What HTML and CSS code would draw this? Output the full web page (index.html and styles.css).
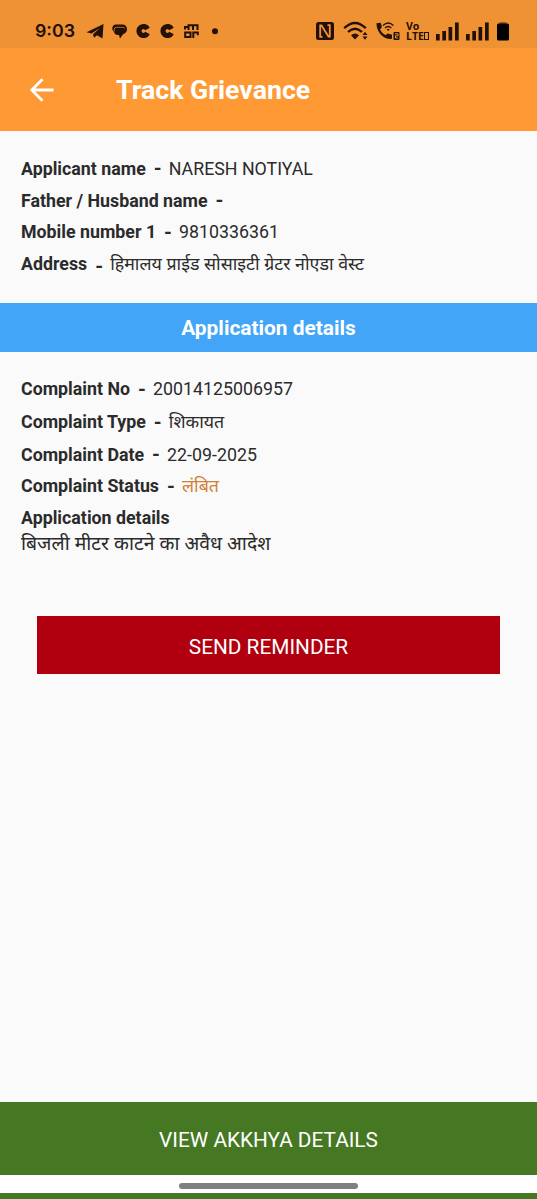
FILE: index.html
```
<!DOCTYPE html>
<html lang="en">
<head>
    <meta charset="UTF-8">
    <meta name="viewport" content="width=device-width, initial-scale=1.0">
    <title>Track Grievance</title>
    <link rel="stylesheet" href="styles.css">
</head>
<body>

<div class="screen">
    <!-- Status bar -->
    <div class="status-bar">
        <span class="time">9:03</span>
        <div class="notifications">
            <svg width="17" height="18" viewBox="0 0 17 18"><path d="M17.500 2 16.500 16.500 11 13.300 8 15.800 7 12.300 14 6 5.500 11.500 .5 10.200Z"/></svg>
            <svg width="15" height="18" viewBox="0 0 15 18"><path d="M4 2.500H10.500c2.500 0 4.500 2 4.500 4.500 0 2.800-1.600 4.500-3.800 5L8 16.500 7 13H6C3.500 13 2.300 11.500 2 9.700 1 9.300.3 8.300.3 6.500.3 4 2 2.500 4 2.500Z"/><path class="cut" d="M2.200 9.500V7.500Q2.200 5.300 4.500 5.300H10.500Q12.300 5.300 13 6.500"/></svg>
            <svg width="15" height="18" viewBox="0 0 15 18"><path class="ring" d="M11.500 7A4.500 4.500 0 1 0 11.500 11"/></svg>
            <svg width="15" height="18" viewBox="0 0 15 18"><path class="ring" d="M11.500 7A4.500 4.500 0 1 0 11.500 11"/></svg>
            <svg width="15" height="18" viewBox="0 0 15 18"><path class="line" d="M1 7.500V5H3.500M4.500 8V3.300H13.500V8M9 3.300V8M1.200 10.500H6.500V15H1.200ZM9.300 16V10.500H13.800V13.200"/></svg>
            <svg width="14" height="18" viewBox="0 0 14 18"><circle cx="7" cy="9.300" r="3"/></svg>
        </div>
        <div class="system-icons">
            <svg width="18" height="20" viewBox="0 0 18 20"><rect y="1" width="18" height="18" rx="2.500"/><path class="nfc-cut" d="M6.500 15.800H4.200V4.500H5.500L12.500 15.500H13.800V4.200H11.500"/></svg>
            <svg class="wifi" width="26" height="20" viewBox="0 0 26 20"><path class="wave" d="M1.200 7.200Q12 -3.200 22.800 7.200M5 11Q12 4.500 19 11"/><path d="M8 14.300Q12 10.500 16 14.300L12 18.500ZM19.500 14 22 10.800 24.500 14ZM19.500 15.500 22 18.700 24.500 15.500Z"/></svg>
            <svg class="call" width="25" height="20" viewBox="0 0 25 20"><path d="M0.500 2.200 4.700 1.800Q6 5 5.600 6.700L3.900 8.400Q6 12.600 9.700 14.200L11.500 12.500 16 13.800V17.800C8 19 .2 11 .5 2.200Z"/><path class="thin-wave" d="M7 4.400Q12.200 -.4 17.400 4.400M9 7Q12.200 4 15.400 7"/><path d="M10.700 8.300Q12.200 7 13.700 8.300L12.200 10Z"/><rect x="17.500" y="11" width="6" height="8" rx="1"/><path class="sim-cut" d="M19 12.800H22V14.800H19.500V17H22"/></svg>
            <div class="volte">
                <span>Vo</span>
                <span class="lte">LTE<i></i></span>
            </div>
            <svg class="signal" width="24" height="20" viewBox="0 0 24 20"><path d="M1 13H4.700V19.500H1ZM7.300 10H11V19.500H7.300ZM13.500 6H17.200V19.500H13.500ZM20 1.500H23.700V19.500H20Z"/></svg>
            <svg class="signal" width="24" height="20" viewBox="0 0 24 20"><path d="M1 13H4.700V19.500H1ZM7.300 10H11V19.500H7.300ZM13.500 6H17.200V19.500H13.500ZM20 1.500H23.700V19.500H20Z"/></svg>
            <svg class="battery" width="12" height="20" viewBox="0 0 12 20"><path class="battery-cap" d="M3 1H9L10 3H2Z"/><rect y="2.500" width="12" height="17" rx="1.500"/></svg>
        </div>
    </div>

    <!-- Toolbar -->
    <header class="toolbar">
        <svg class="back" width="24" height="24" viewBox="0 0 24 24"><path d="M23.500 12H2M12.500 1.200 1.800 12 12.500 22.800"/></svg>
        <h1>Track Grievance</h1>
    </header>

    <!-- Applicant -->
    <section class="applicant">
        <div class="row"><span class="label clipped">Applicant name</span><b class="dash">-</b><span>NARESH NOTIYAL</span></div>
        <div class="row"><span class="label">Father / Husband name</span><b class="dash">-</b></div>
        <div class="row"><span class="label">Mobile number 1</span><b class="dash">-</b><span>9810336361</span></div>
        <div class="row address"><span class="label">Address</span><b class="dash">-</b><span class="hindi" lang="hi">हिमालय प्राईड सोसाइटी ग्रेटर नोएडा वेस्ट</span></div>
    </section>

    <h2>Application details</h2>

    <!-- Complaint -->
    <section class="complaint">
        <div class="row"><span class="label clipped">Complaint No</span><b class="dash">-</b><span>20014125006957</span></div>
        <div class="row type"><span class="label">Complaint Type</span><b class="dash">-</b><span class="hindi" lang="hi">शिकायत</span></div>
        <div class="row"><span class="label clipped">Complaint Date</span><b class="dash">-</b><span>22-09-2025</span></div>
        <div class="row"><span class="label">Complaint Status</span><b class="dash">-</b><span class="hindi pending" lang="hi">लंबित</span></div>
        <div class="row"><span class="label">Application details</span></div>
        <p class="hindi description" lang="hi">बिजली मीटर काटने का अवैध आदेश</p>
    </section>

    <button class="reminder">SEND REMINDER</button>

    <footer>
        <button class="view-details">VIEW AKKHYA DETAILS</button>
        <div class="nav-bar"><div class="handle"></div></div>
        <div class="bottom-strip"></div>
    </footer>
</div>

</body>
</html>
```
FILE: styles.css
```
* {
    box-sizing: border-box;
}
body {
    margin: 0;
    font-family: Roboto, "Noto Sans", sans-serif;
    background-color: #fafafa;
    color: #2b2b2b;
}
.screen {
    display: flex;
    flex-direction: column;
    height: 1199px;
    overflow: hidden;
}
svg {
    display: block;
    flex: none;
    overflow: visible;
    fill: #231006;
}

/* Status bar */
.status-bar {
    display: flex;
    align-items: center;
    height: 48px;
    padding: 14px 28px 0 35px;
    background: #ef9234;
    color: #231006;
}
.time {
    width: 51px;
    font: 600 17.8px/20px Inter, sans-serif;
    white-space: nowrap;
}
.notifications {
    display: flex;
    gap: 9px;
}
.system-icons {
    display: flex;
    align-items: center;
    margin-left: auto;
}
.cut {
    fill: none;
    stroke: #ef9234;
    stroke-width: 0.7;
}
.ring {
    fill: none;
    stroke: #231006;
    stroke-width: 5.2;
}
.line {
    fill: none;
    stroke: #231006;
    stroke-width: 2;
}
.nfc-cut {
    fill: none;
    stroke: #ef9234;
    stroke-width: 1.8;
}
.wave, .thin-wave {
    fill: none;
    stroke: #231006;
    stroke-width: 2.3;
}
.thin-wave {
    stroke-width: 1.4;
}
.sim-cut {
    fill: none;
    stroke: #ef9234;
    stroke-width: 1;
}
.wifi {
    margin-left: 9px;
}
.call {
    margin-left: 7px;
}
.volte {
    width: 24px;
    margin: 0 5px;
    font: 700 10.5px/10px "Open Sans", sans-serif;
}
.volte span {
    display: flex;
}
.lte i {
    width: 5px;
    height: 8px;
    margin: 1px 0 0;
    border: 1.5px solid #231006;
}
.signal {
    margin-right: 6px;
}
.battery {
    margin-left: 2px;
    fill: #000;
}
.battery-cap {
    fill: #8f591f;
}

/* Toolbar */
.toolbar {
    display: flex;
    align-items: center;
    height: 83px;
    padding: 0 30px;
    background: #ff9933;
    color: #fff;
}
.back {
    fill: none;
    stroke: #fff;
    stroke-width: 2.8;
}
h1 {
    margin: 1px 0 0 62px;
    font-size: 26.7px;
    font-weight: 700;
}

/* Details */
.applicant {
    height: 172px;
    padding: 21.5px 21px 0;
}
.complaint {
    padding: 21px 21px 0;
}
.row {
    display: flex;
    align-items: center;
    height: 31.8px;
    font-size: 17.8px;
    white-space: nowrap;
}
.label {
    font-weight: 700;
}
.clipped {
    height: 19px;
    line-height: 20px;
    overflow: hidden;
}
.dash {
    width: 7px;
    margin: 0 8px;
    font-size: 20px;
    line-height: 20px;
}
.address .dash {
    padding-top: 4px;
}
.hindi {
    font-family: "Noto Sans", Roboto, sans-serif;
}
.row .hindi {
    margin-top: -1px;
}
.type {
    height: 33.5px;
}
.pending {
    color: #cf8036;
}
.description {
    margin: -4px 0 0;
    font-size: 19.4px;
    line-height: 26px;
}
h2 {
    height: 49px;
    margin: 0;
    background: #42a5f7;
    color: #fff;
    font-size: 20.9px;
    line-height: 51px;
    text-align: center;
}

/* Buttons */
button {
    border: 0;
    color: #fff;
    font-family: Roboto, sans-serif;
    font-size: 20.8px;
}
.reminder {
    height: 58px;
    margin: 60.4px 37px 0;
    padding: 3px 0 0;
    background: #b0000f;
}
footer {
    margin-top: auto;
}
.view-details {
    display: block;
    width: 100%;
    height: 73px;
    padding: 2px 0 0;
    background: #467824;
}
.nav-bar {
    display: flex;
    align-items: center;
    justify-content: center;
    height: 18px;
    padding-top: 3px;
    background: #fff;
}
.handle {
    width: 179px;
    height: 6px;
    border-radius: 3px;
    background: #808080;
}
.bottom-strip {
    height: 6px;
    background: #467824;
}
```
